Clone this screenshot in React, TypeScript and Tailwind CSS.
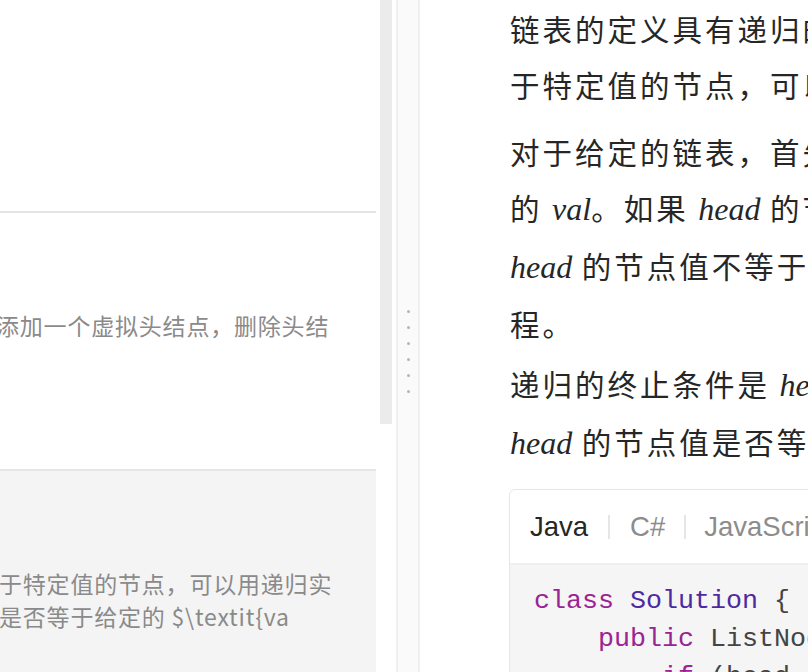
const cjk = "font-['Noto_Sans_CJK_SC','Noto_Sans',sans-serif]";

function M({ children }: { children: React.ReactNode }) {
  return <span className="font-['Liberation_Serif',serif] italic text-[32px] tracking-normal">{children}</span>;
}

function Dots() {
  return (
    <div className="flex flex-col items-center gap-[13px] pt-[310px]">
      {[0, 1, 2, 3, 4, 5].map((i) => (
        <div key={i} className="size-[3px] rounded-full bg-[#b4b4b4]" />
      ))}
    </div>
  );
}

export default function App() {
  return (
    <div className="w-[808px] h-[672px] overflow-hidden flex bg-white">
      {/* left panel */}
      <div className={"w-[376px] shrink-0 flex flex-col overflow-hidden text-[#8a8a8a] text-[23px] tracking-[0.8px] leading-[33px] " + cjk}>
        <div className="h-[211px] shrink-0" />
        <div className="h-[2px] shrink-0 bg-[#e5e5e5]" />
        <div className="h-[256px] shrink-0 pt-[96px] whitespace-nowrap">
          <div className="-ml-[4px]">添加一个虚拟头结点，删除头结</div>
        </div>
        <div className="flex-1 border-t-2 border-[#e6e6e6] bg-[#f4f4f4] pt-[96px] whitespace-nowrap">
          <div className="-ml-[1px]">于特定值的节点，可以用递归实</div>
          <div className="-ml-[1px]">是否等于给定的 $\textit{"{"}va</div>
        </div>
      </div>

      {/* scrollbar */}
      <div className="w-[12px] ml-[4px] h-[424px] shrink-0 bg-[#ebebeb]" />

      {/* resizer */}
      <div className="w-[24px] ml-[4px] shrink-0 border-x-2 border-[#efefef] bg-[#fafafa]">
        <Dots />
      </div>

      {/* right panel */}
      <div className="flex-1 min-w-0 overflow-hidden">
        <div className={"w-[760px] pl-[90px] text-[#262626] text-[29.5px] tracking-[3px] leading-[56px] whitespace-nowrap " + cjk}>
          <p>
            链表的定义具有递归的性质，因此链表题目
            <br />
            于特定值的节点，可以用递归实现。
          </p>
          <p className="mt-[11px]">
            对于给定的链表，首先对除了头节点
            <br />
            的 <M>val</M>。如果 <M>head</M> 的节点值等于
            <br />
            <M>head</M> 的节点值不等于 <M>val</M>，则
            <br />
            程。
          </p>
          <p className="mt-[4px]">
            递归的终止条件是 <M>head</M> 为空
            <br />
            <M>head</M> 的节点值是否等于 <M>val</M>
          </p>

          {/* code block */}
          <div className="mt-[18px] -ml-[1px] rounded-tl-[6px] border border-[#e6e6e6] overflow-hidden tracking-normal">
            <div className="h-[73px] flex items-center pl-[20px] text-[27.5px] font-['Liberation_Sans',sans-serif] leading-none">
              <span className="text-[#262626]">Java</span>
              <span className="mx-[20px] w-[2px] h-[24px] bg-[#e6e6e6]" />
              <span className="text-[#8c8c8c]">C#</span>
              <span className="ml-[19px] mr-[18px] w-[2px] h-[24px] bg-[#e6e6e6]" />
              <span className="text-[#8c8c8c]">JavaScript</span>
              <span className="mx-[20px] w-[2px] h-[24px] bg-[#e6e6e6]" />
              <span className="text-[#8c8c8c]">Golang</span>
            </div>
            <div className="border-t-2 border-[#efefef] bg-[#f5f5f5] pt-[17px] pl-[24px] h-[200px] font-['Liberation_Mono',monospace] text-[26.67px] leading-[38px] text-[#444] whitespace-pre">
              <div>
                <span className="text-[#9b2393]">class</span> <span className="text-[#4e2a9e]">Solution</span> {"{"}
              </div>
              <div>
                {"    "}
                <span className="text-[#9b2393]">public</span> ListNode removeElements(ListNode head, <span className="text-[#9b2393]">int</span> val) {"{"}
              </div>
              <div>
                {"        "}
                <span className="text-[#9b2393]">if</span> (head == <span className="text-[#9b2393]">null</span>) {"{"}
              </div>
            </div>
          </div>
        </div>
      </div>
    </div>
  );
}
